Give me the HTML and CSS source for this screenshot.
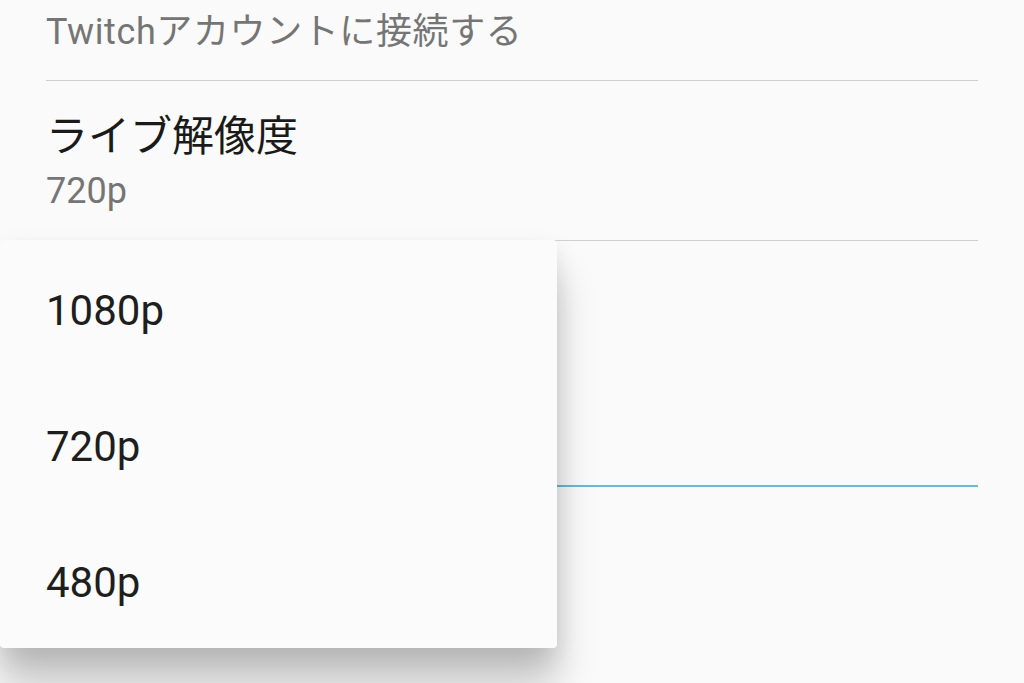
FILE: index.html
```html
<!DOCTYPE html>
<html lang="ja">
<head>
  <meta charset="UTF-8">
  <title>ライブ解像度</title>
  <link rel="stylesheet" href="styles.css">
</head>
<body>

  <main class="prefs">
    <div class="row row-top">
      <p class="pref-sub">Twitchアカウントに接続する</p>
    </div>

    <div class="row row-pref">
      <p class="pref-title">ライブ解像度</p>
      <p class="pref-sub">720p</p>
    </div>

    <div class="field"></div>
  </main>

  <ul class="menu">
    <li>1080p</li>
    <li>720p</li>
    <li>480p</li>
  </ul>

</body>
</html>
```

FILE: styles.css
```css
    body {
      font-family: Roboto, "Noto Sans CJK JP", sans-serif;
      margin: 0;
      padding: 0;
      background-color: #fafafa;
      color: #212121;
      overflow: hidden;
    }

    p {
      margin: 0;
    }

    .prefs {
      padding: 0 46px;
    }

    .row {
      box-sizing: border-box;
      border-bottom: 1px solid #cfcfcf;
    }

    .row-top {
      height: 81px;
      padding-top: 12px;
    }

    .row-top .pref-sub {
      letter-spacing: 0.6px;
    }

    .row-pref {
      height: 160px;
      padding-top: 32px;
    }

    .pref-title {
      font-size: 42px;
      line-height: 48px;
      color: #1a1a1a;
    }

    .pref-sub {
      font-size: 36px;
      line-height: 40px;
      color: #757575;
    }

    .row-pref .pref-sub {
      margin-top: 10px;
    }

    .field {
      height: 244px;
      border-bottom: 2px solid #6cb9d3;
    }

    /* popup menu over the list */
    .menu {
      position: absolute;
      left: 0;
      top: 240px;
      width: 557px;
      margin: 0;
      padding: 0;
      list-style: none;
      background-color: #fbfbfb;
      border-radius: 4px;
      box-shadow: 0 36px 38px rgba(0, 0, 0, 0.22), 0 8px 22px rgba(0, 0, 0, 0.09);
    }

    .menu li {
      box-sizing: border-box;
      height: 136px;
      padding: 6px 46px 0;
      font-size: 42px;
      line-height: 130px;
      color: #1e1e1e;
    }
```
